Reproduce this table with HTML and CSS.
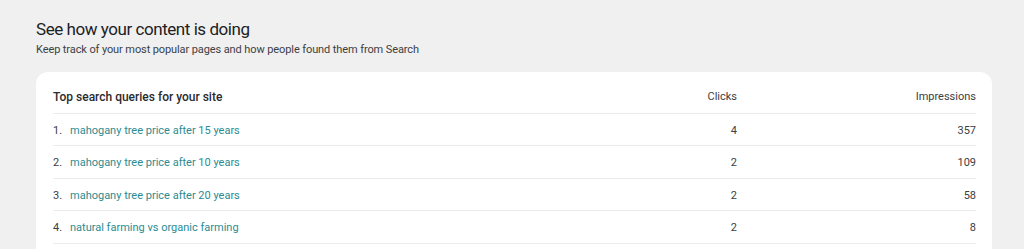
FILE: index.html
```html
<!DOCTYPE html>
<html>
<head>
<meta charset="utf-8">
<link rel="stylesheet" href="styles.css">
</head>
<body>
<div class="page">
  <h1 class="title">See how your content is doing</h1>
  <p class="subtitle">Keep track of your most popular pages and how people found them from Search</p>
  <div class="card">
    <table class="tbl">
      <thead>
        <tr><th class="q">Top search queries for your site</th><th class="num">Clicks</th><th class="num impr">Impressions</th></tr>
      </thead>
      <tbody>
        <tr><td class="q"><span class="idx">1.</span><a class="link">mahogany tree price after 15 years</a></td><td class="num">4</td><td class="num">357</td></tr>
        <tr><td class="q"><span class="idx">2.</span><a class="link">mahogany tree price after 10 years</a></td><td class="num">2</td><td class="num">109</td></tr>
        <tr><td class="q"><span class="idx">3.</span><a class="link">mahogany tree price after 20 years</a></td><td class="num">2</td><td class="num">58</td></tr>
        <tr><td class="q"><span class="idx">4.</span><a class="link">natural farming vs organic farming</a></td><td class="num">2</td><td class="num">8</td></tr>
      </tbody>
    </table>
  </div>
</div>
</body>
</html>
```
FILE: styles.css
```css
html, body { margin: 0; padding: 0; }
body {
  background: #f0f0f0;
  font-family: "Roboto", "Inter", sans-serif;
  color: #202124;
  overflow: hidden;
}
.page { padding: 18px 32px 0 36px; }
.title {
  margin: 0;
  font-size: 17px;
  font-weight: 400;
  line-height: 22px;
  letter-spacing: -0.45px;
}
.subtitle {
  margin: 2px 0 0;
  font-size: 11px;
  line-height: 15px;
  letter-spacing: -0.1px;
  color: #3c4043;
}
.card {
  margin-top: 15px;
  background: #fff;
  border-radius: 12px;
  padding: 0 16px 0 17px;
  height: 300px;
}
.tbl { width: 100%; border-collapse: collapse; font-size: 11px; }
.tbl th {
  font-weight: 500;
  font-size: 12px;
  text-align: left;
  height: 41px;
  padding: 9px 0 0;
  border-bottom: 1px solid #ececec;
  vertical-align: middle;
  box-sizing: border-box;
  color: #2a2b2e;
}
.tbl th.num, .tbl td.num { text-align: right; }
.tbl th.num { font-weight: 400; font-size: 11px; color: #3c4043; }
.tbl th.impr { width: 239px; }
.tbl td {
  height: 32.5px;
  box-sizing: border-box;
  padding: 2px 0 0;
  border-bottom: 1px solid #ececec;
  color: #3c4043;
}
.idx { display: inline-block; width: 17px; }
.link { color: #2a8c93; }
```
